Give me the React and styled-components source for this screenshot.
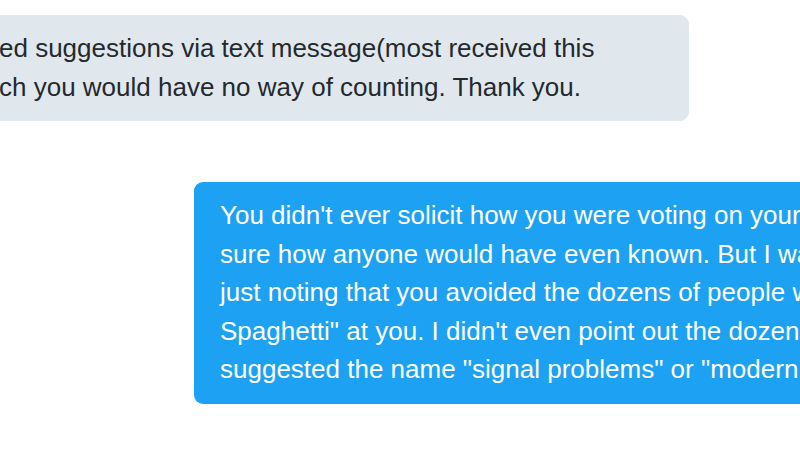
import React from 'react';
import styled, { createGlobalStyle } from 'styled-components';

const GlobalStyle = createGlobalStyle`
  html, body {
    margin: 0;
    padding: 0;
    background: #ffffff;
  }
`;

const Thread = styled.div`
  width: 800px;
  height: 450px;
  overflow: hidden;
  display: flex;
  flex-direction: column;
  gap: 61px;
  padding-top: 15px;
  box-sizing: border-box;
  font-family: "Liberation Sans", Arial, sans-serif;
`;

const Row = styled.div`
  display: flex;
  justify-content: flex-start;
`;

const Bubble = styled.div`
  flex: none;
  box-sizing: border-box;
  width: ${(p) => p.$width}px;
  margin-left: ${(p) => p.$offset}px;
  padding: 14px 26px 15px;
  border-radius: 9px;
  background: ${(p) => (p.$sent ? '#1da1f2' : '#e1e8ed')};
  color: ${(p) => (p.$sent ? '#ffffff' : '#24292e')};
  font-size: 26px;
  line-height: 38.5px;
  white-space: nowrap;
`;

const received = [
  'ed suggestions via text message(most received this',
  'ch you would have no way of counting. Thank you.',
];

// the sent bubble runs past the right edge of the window, as in the capture
const sent = [
  "You didn't ever solicit how you were voting on your",
  'sure how anyone would have even known. But I was',
  'just noting that you avoided the dozens of people who',
  'Spaghetti" at you. I didn\'t even point out the dozens',
  'suggested the name "signal problems" or "modern',
];

const Lines = ({ lines }) =>
  lines.map((l, i) => (
    <React.Fragment key={i}>
      {l}
      {i < lines.length - 1 && <br />}
    </React.Fragment>
  ));

export default function App() {
  return (
    <>
      <GlobalStyle />
      <Thread>
        <Row>
          <Bubble $offset={-27} $width={716}>
            <Lines lines={received} />
          </Bubble>
        </Row>
        <Row>
          <Bubble $sent $offset={194} $width={720}>
            <Lines lines={sent} />
          </Bubble>
        </Row>
      </Thread>
    </>
  );
}
